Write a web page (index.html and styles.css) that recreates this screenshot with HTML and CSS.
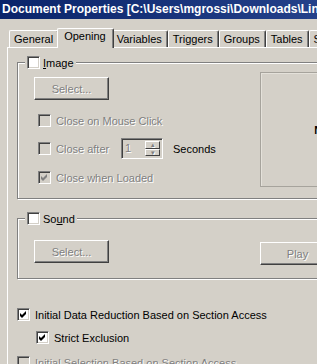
FILE: index.html
```html
<!DOCTYPE html>
<html lang="en">
<head>
  <meta charset="utf-8" />
  <title>Document Properties</title>
  <link rel="stylesheet" href="styles.css">
</head>
<body>
  <div class="window">
    <div class="titlebar">Document Properties [C:\Users\mgrossi\Downloads\LinkedDocument.qvw]</div>

    <div class="tabs">
      <div class="tab">General</div>
      <div class="tab active">Opening</div>
      <div class="tab">Variables</div>
      <div class="tab">Triggers</div>
      <div class="tab">Groups</div>
      <div class="tab">Tables</div>
      <div class="tab">Sheets</div>
    </div>

    <div class="panel">
      <fieldset class="group image-group">
        <legend><span class="check"></span><span><u>I</u>mage</span></legend>
        <div class="image-body">
          <div class="image-options">
            <button class="btn" disabled>Select...</button>
            <div class="row disabled first">
              <span class="check"></span>Close on Mouse Click
            </div>
            <div class="row disabled">
              <span class="check"></span><span class="row-label">Close after</span>
              <span class="spin">
                <span class="spin-value">1</span>
                <span class="spin-btns">
                  <span class="spin-btn">&#9652;</span>
                  <span class="spin-btn">&#9662;</span>
                </span>
              </span>
              <span class="seconds">Seconds</span>
            </div>
            <div class="row disabled">
              <span class="check checked">
                <svg width="7" height="7" viewBox="0 0 7 7"><path d="M0 2 L2 4 L6 0 L6 3 L2 7 L0 5 Z" /></svg>
              </span>Close when Loaded
            </div>
          </div>
          <div class="preview">No Image</div>
        </div>
      </fieldset>

      <fieldset class="group sound-group">
        <legend><span class="check"></span><span>So<u>u</u>nd</span></legend>
        <div class="sound-body">
          <button class="btn" disabled>Select...</button>
          <button class="btn play" disabled>Play</button>
        </div>
      </fieldset>

      <div class="row access">
        <span class="check on">
          <svg width="7" height="7" viewBox="0 0 7 7"><path d="M0 2 L2 4 L6 0 L6 3 L2 7 L0 5 Z" /></svg>
        </span>Initial Data Reduction Based on Section Access
      </div>
      <div class="row strict">
        <span class="check on">
          <svg width="7" height="7" viewBox="0 0 7 7"><path d="M0 2 L2 4 L6 0 L6 3 L2 7 L0 5 Z" /></svg>
        </span>Strict Exclusion
      </div>
      <div class="row disabled selection">
        <span class="check"></span>Initial Selection Based on Section Access
      </div>
    </div>
  </div>
</body>
</html>
```

FILE: styles.css
```css
body {
  margin: 0;
  width: 317px;
  height: 364px;
  overflow: hidden;
  background: #d4d0c8;
  font-family: "Liberation Sans", Arial, sans-serif;
  font-size: 11px;
  color: #000;
}

.window {
  width: 460px;
}

.titlebar {
  height: 19px;
  line-height: 19px;
  padding-left: 2px;
  background: linear-gradient(to right, #0a246a, #24418a 320px, #a6caf0);
  color: #fff;
  font-weight: bold;
  font-size: 12px;
  white-space: nowrap;
  overflow: hidden;
}

/* tab strip */
.tabs {
  display: flex;
  align-items: flex-end;
  height: 19px;
  margin-top: 9px;
  padding-left: 9px;
}

.tab {
  height: 17px;
  line-height: 16px;
  padding: 0 5px 0 4px;
  border-left: 1px solid #fff;
  border-top: 1px solid #fff;
  border-right: 1px solid #404040;
  border-top-left-radius: 2px;
  border-top-right-radius: 2px;
  box-shadow: inset -1px 0 #808080;
  box-sizing: border-box;
  white-space: nowrap;
}

.tab.active {
  position: relative;
  z-index: 1;
  height: 20px;
  line-height: 15px;
  margin: 0 -2px -1px;
  padding: 0 7px 0 6px;
  background: #d4d0c8;
}

.panel {
  border-left: 1px solid #fff;
  border-top: 1px solid #fff;
  margin-left: 7px;
  padding: 8px 0 0 9px;
  height: 400px;
}

/* group boxes */
.group {
  margin: 0;
  padding: 0 7px;
  border: 1px solid #808080;
  box-shadow: inset 1px 1px #fff, 1px 1px #fff;
  min-width: 0;
}

.group legend {
  display: flex;
  align-items: center;
  gap: 3px;
  padding: 0 2px;
  height: 13px;
  background: #d4d0c8;
}

.image-body {
  display: flex;
  padding-top: 3px;
  height: 126px;
}

.image-options {
  width: 226px;
  padding: 5px 0 0 9px;
}

.preview {
  width: 156px;
  height: 113px;
  border: 1px solid #a6a39c;
  box-shadow: inset 1px 1px #e4e1da;
  display: flex;
  align-items: center;
  justify-content: center;
  font-weight: bold;
}

.sound-group {
  margin-top: 13px;
}

.sound-body {
  display: flex;
  align-items: flex-start;
  padding: 15px 0 13px 9px;
}

.sound-body .play {
  margin: 2px 0 0 151px;
}

/* controls */
.btn {
  display: block;
  width: 75px;
  height: 23px;
  padding: 0;
  background: #d4d0c8;
  border: 1px solid;
  border-color: #fff #404040 #404040 #fff;
  box-shadow: inset -1px -1px #808080;
  font: inherit;
  color: #000;
}

.btn:disabled {
  color: #808080;
  text-shadow: 1px 1px #fff;
}

.check {
  display: inline-flex;
  align-items: center;
  justify-content: center;
  flex: none;
  width: 13px;
  height: 13px;
  box-sizing: border-box;
  border: 1px solid;
  border-color: #808080 #fff #fff #808080;
  box-shadow: inset 1px 1px #404040, inset -1px -1px #d4d0c8;
  background: #fff;
}

.check svg {
  fill: #000;
}

.row {
  display: flex;
  align-items: center;
  gap: 5px;
  height: 13px;
  white-space: nowrap;
}

.row.disabled {
  color: #808080;
  text-shadow: 1px 1px #fff;
}

.row.disabled .check {
  background: #d4d0c8;
}

.row.disabled .check svg {
  fill: #808080;
}

.image-options .row {
  margin: 15px 0 0 4px;
}

.image-options .row.first {
  margin-top: 14px;
}

.image-options .row:last-child {
  margin-top: 16px;
}

.row-label {
  width: 60px;
}

.spin {
  display: flex;
  width: 42px;
  height: 21px;
  flex: none;
  box-sizing: border-box;
  border: 1px solid;
  border-color: #808080 #fff #fff #808080;
  box-shadow: inset 1px 1px #404040, inset -1px -1px #d4d0c8;
  padding: 2px;
}

.spin-value {
  flex: 1;
  line-height: 15px;
  padding-left: 1px;
}

.spin-btns {
  display: flex;
  flex-direction: column;
  width: 15px;
}

.spin-btn {
  flex: 1;
  border: 1px solid;
  border-color: #fff #404040 #404040 #fff;
  font-size: 7px;
  line-height: 6px;
  text-align: center;
  overflow: hidden;
}

.seconds {
  margin-left: 5px;
  color: #000;
  text-shadow: none;
}

.access {
  margin-top: 29px;
}

.strict {
  margin: 10px 0 0 19px;
}

.selection {
  margin-top: 12px;
}
```
